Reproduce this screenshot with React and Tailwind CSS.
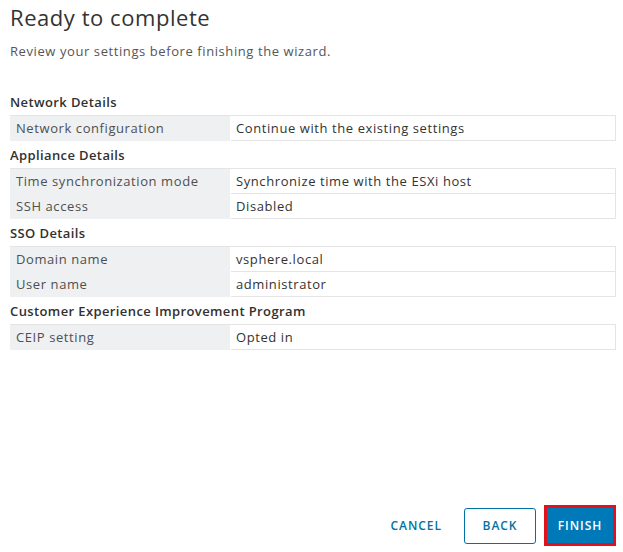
import React from 'react';

const sections = [
  {
    title: 'Network Details',
    rows: [['Network configuration', 'Continue with the existing settings']],
  },
  {
    title: 'Appliance Details',
    rows: [
      ['Time synchronization mode', 'Synchronize time with the ESXi host'],
      ['SSH access', 'Disabled'],
    ],
  },
  {
    title: 'SSO Details',
    rows: [
      ['Domain name', 'vsphere.local'],
      ['User name', 'administrator'],
    ],
  },
  {
    title: 'Customer Experience Improvement Program',
    rows: [['CEIP setting', 'Opted in']],
  },
];

const Section = ({ title, rows }) => (
  <div>
    <div className="h-[27px] pt-[5px] leading-[19px] text-[13px] font-semibold tracking-[0.03em] text-[#313131]">{title}</div>
    <div className="border-t border-[#e4e4e4]">
      {rows.map(([label, value]) => (
        <div key={label} className="flex h-[25px] text-[13px] tracking-[0.045em]">
          <div className="w-[220px] bg-[#eef0f2] px-[6px] leading-[25px] text-[#4f4f4f]">{label}</div>
          <div className="flex-1 ml-px border-b border-r border-[#e4e4e4] px-[5px] leading-[24px] text-[#333]">
            {value}
          </div>
        </div>
      ))}
    </div>
  </div>
);

export default function App() {
  return (
    <div
      className="min-h-[552px] w-[623px] flex flex-col bg-white pl-[10px] pr-[7px]"
      style={{ fontFamily: '"Open Sans", "Liberation Sans", sans-serif' }}
    >
      <h1 className="pt-[2px] text-[22px] leading-[30px] font-normal tracking-[0.025em] text-[#333]">Ready to complete</h1>
      <p className="mt-[9px] text-[13px] leading-[20px] tracking-[0.045em] text-[#565656]">
        Review your settings before finishing the wizard.
      </p>

      <div className="mt-[27px]">
        {sections.map((s) => (
          <Section key={s.title} title={s.title} rows={s.rows} />
        ))}
      </div>

      <div className="mt-auto flex items-center justify-end pb-[6px]">
        <button className="h-[36px] px-[12px] mr-[10px] text-[12px] font-semibold tracking-[0.08em] text-[#0072a3]">
          CANCEL
        </button>
        <button className="h-[36px] w-[72px] rounded-[3px] border border-[#0072a3] text-[12px] font-semibold tracking-[0.08em] text-[#0072a3]">
          BACK
        </button>
        <button className="ml-[8px] h-[41px] w-[72px] border-[3px] border-[#e0121c] bg-[#0079b8] text-[12px] font-semibold tracking-[0.08em] text-white">
          FINISH
        </button>
      </div>
    </div>
  );
}
